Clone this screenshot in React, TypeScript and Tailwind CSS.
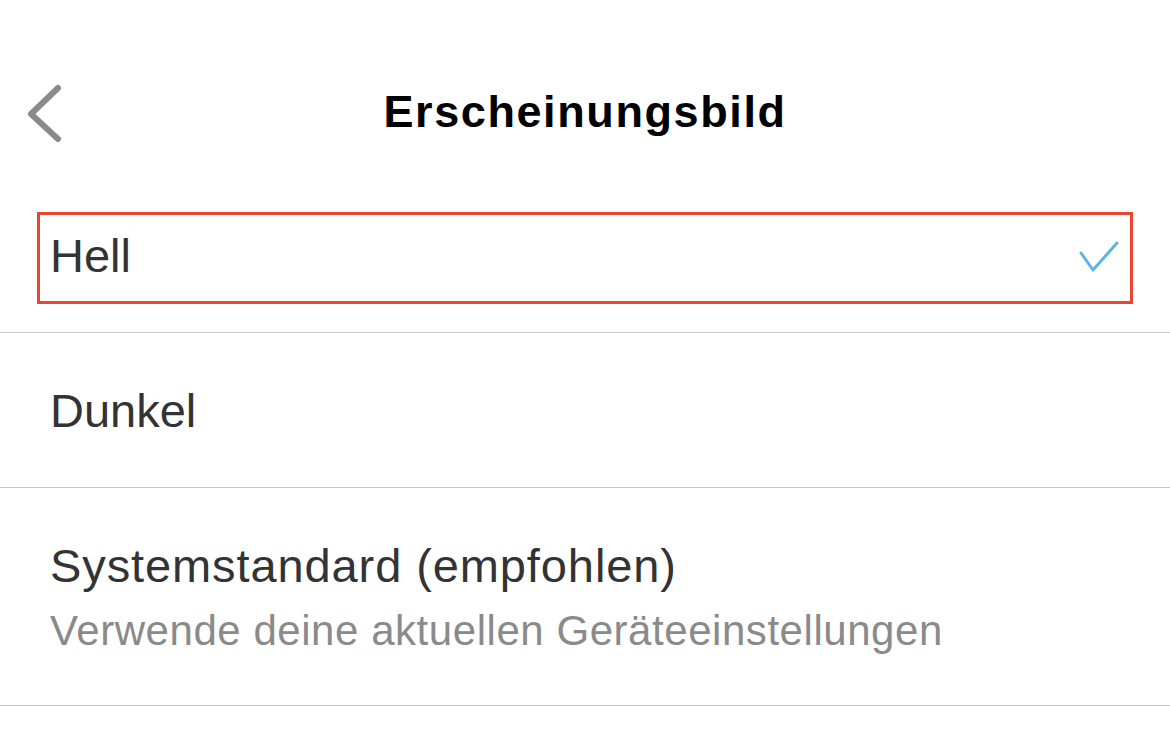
import React from "react";

type Option = {
  id: string;
  label: string;
  hint?: string;
};

const options: Option[] = [
  { id: "light", label: "Hell" },
  { id: "dark", label: "Dunkel" },
  {
    id: "system",
    label: "Systemstandard (empfohlen)",
    hint: "Verwende deine aktuellen Geräteeinstellungen",
  },
];

function BackChevron() {
  return (
    <svg width="40" height="64" viewBox="0 0 40 64" fill="none" className="mt-[4px]">
      <path
        d="M34 6 L7 32 L34 57"
        stroke="#8a8a8a"
        strokeWidth="6"
        strokeLinecap="round"
        strokeLinejoin="round"
      />
    </svg>
  );
}

function Check() {
  return (
    <svg width="46" height="38" viewBox="0 0 46 38" fill="none" className="mt-[3px]">
      <path
        d="M5 15 L17 32 L41 5"
        stroke="#5bb5e6"
        strokeWidth="3"
        strokeLinecap="round"
        strokeLinejoin="round"
      />
    </svg>
  );
}

export default function App() {
  const [selected, setSelected] = React.useState("light");

  return (
    <div
      className="w-[1170px] h-[741px] bg-white overflow-hidden"
      style={{ fontFamily: '"Liberation Sans", Arial, sans-serif' }}
    >
      {/* nav bar */}
      <div className="h-[178px] pt-[45px] grid grid-cols-[1fr_auto_1fr] items-center">
        <div className="pl-[24px] flex items-center">
          <button aria-label="Zurück" className="flex items-center">
            <BackChevron />
          </button>
        </div>
        <h1 className="text-[45px] leading-none font-bold text-black tracking-[1.6px]">
          Erscheinungsbild
        </h1>
        <div />
      </div>

      {options.map((o) => {
        const isOn = selected === o.id;
        if (o.hint) {
          return (
            <div
              key={o.id}
              onClick={() => setSelected(o.id)}
              className="h-[218px] border-b border-[#c8c8c8] pl-[50px] pr-[48px] pt-[54px] flex items-start justify-between cursor-pointer"
            >
              <div className="flex flex-col">
                <span className="text-[47px] leading-[47px] text-[#333333] tracking-[0.9px]">{o.label}</span>
                <span className="mt-[21px] text-[42px] leading-[42px] text-[#8a8a8a] tracking-[0.55px]">{o.hint}</span>
              </div>
              {isOn ? <Check /> : null}
            </div>
          );
        }
        return (
          <div
            key={o.id}
            onClick={() => setSelected(o.id)}
            className="relative h-[155px] border-b border-[#c8c8c8] pl-[50px] pr-[48px] flex items-center justify-between cursor-pointer"
          >
            <span className="text-[47px] leading-[47px] text-[#333333]">{o.label}</span>
            {isOn ? <Check /> : null}
            {/* highlight frame around the chosen row */}
            {isOn ? (
              <div className="pointer-events-none absolute left-[37px] right-[37px] top-[34px] h-[92px] border-[3px] border-[#e8472f]" />
            ) : null}
          </div>
        );
      })}
    </div>
  );
}
